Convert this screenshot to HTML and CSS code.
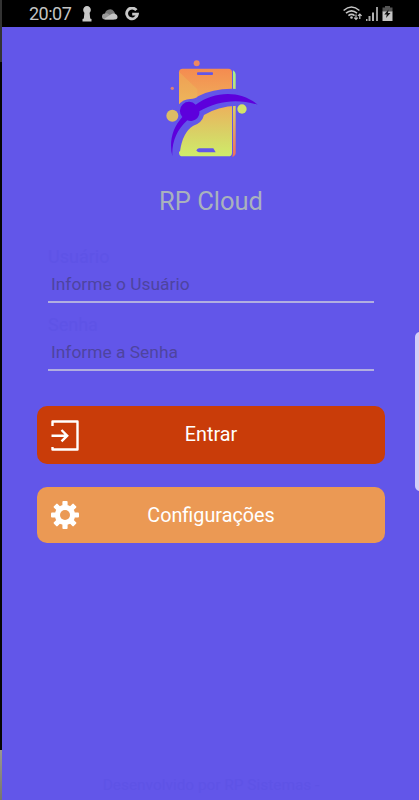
FILE: index.html
```
<!DOCTYPE html>
<html lang="pt-BR">
<head>
    <meta charset="UTF-8">
    <meta name="viewport" content="width=device-width, initial-scale=1.0">
    <title>RP Cloud</title>
    <link rel="stylesheet" href="styles.css">
</head>
<body>

    <div class="app-container">
        <div class="status-bar">
            <span class="clock">20:07</span>
            <svg class="icon-keyhole" width="10" height="16" viewBox="0 0 10 16">
                <path fill="#c8c8c8" d="M5 0A3.800 3.800 0 0 0 1.200 4c0 1.200.5 2 1.200 2.700L1.800 12.500.5 13v2.500h9V13l-1.300-.5-.6-5.800C8.300 6 8.800 5.200 8.800 4A3.800 3.800 0 0 0 5 0z"/>
            </svg>
            <svg class="icon-cloud" width="16" height="11" viewBox="0 0 16 11">
                <path fill="#777" d="M3 6a5 5 0 0 1 9-3.500L14 6l-6 2z"/>
                <path fill="#999" d="M3 10.500a3 3 0 0 1 0-6c2-.5 3 .2 5 1.500l4 4.500z"/>
                <path fill="#c4c4c4" d="M2 10l6-4c2-1.500 4-2 5.500-.8 2.500.3 3 5.300-.5 5.300H3.500z"/>
            </svg>
            <svg class="icon-google" width="14" height="14" viewBox="0 0 14 14">
                <path fill="none" stroke="#c8c8c8" stroke-width="2.800" d="M11.400 3.200A5.400 5.400 0 1 0 12.400 7.200H7.200"/>
            </svg>
            <div class="status-right">
                <svg width="20" height="15" viewBox="0 0 20 15">
                    <g fill="none" stroke="#c4c4c4" stroke-width="1.600">
                        <path d="M.6 4.500Q8.500-2.500 16.400 4.500"/>
                        <path d="M3 7.200Q8.500 2.400 14 7.200"/>
                        <path d="M5.400 9.700Q8.500 7.200 11.600 9.700"/>
                    </g>
                    <circle cx="8.500" cy="11.500" r="1.300" fill="#c4c4c4"/>
                    <path fill="none" stroke="#c4c4c4" stroke-width="1.200" d="M13 8.500v5m-1.800-1.800L13 13.500l1.800-1.800M16.800 13V8m-1.800 1.800L16.800 8l1.800 1.800"/>
                </svg>
                <svg width="13" height="14" viewBox="0 0 13 14">
                    <path fill="#aaa" d="M0 12h1.500v2H0zM2.500 9h2v5h-2z"/>
                    <path fill="#b4b4b4" d="M6 5.500h2V14H6z"/>
                    <path fill="#999" d="M10 0h2v14h-2z"/>
                </svg>
                <svg width="11" height="15" viewBox="0 0 11 15">
                    <path fill="#555" d="M3 0h5v1.500h2.500V6H.5V1.500H3z"/>
                    <path fill="#c4c4c4" d="M.5 5.500h10V15H.5z"/>
                    <path fill="#111" d="M6.500 3.500L2.300 8.500h2.500L4 12l4.500-5H6z"/>
                </svg>
            </div>
        </div>

        <div class="login">
            <svg class="logo" width="120" height="120" viewBox="0 0 360 360">
                <defs>
                    <linearGradient id="phone" x1="0" y1="0" x2="0" y2="1">
                        <stop offset="0" stop-color="#f58b50"/>
                        <stop offset=".4" stop-color="#eeaf5b"/>
                        <stop offset=".75" stop-color="#d8d366"/>
                        <stop offset="1" stop-color="#cfec69"/>
                    </linearGradient>
                    <linearGradient id="edge" x1="0" y1="0" x2="0" y2="1">
                        <stop offset="0" stop-color="#a5f389"/>
                        <stop offset=".4" stop-color="#d9d165"/>
                        <stop offset="1" stop-color="#ef6f5b"/>
                    </linearGradient>
                </defs>
                <path fill="url(#edge)" d="M249 61q8 4 8 12V309q0 8-10 12l2-10z"/>
                <rect x="87" y="56" width="159" height="263" rx="11" fill="url(#phone)"/>
                <path fill="#e9c75c" opacity=".3" d="M88 66L142 118V150H88z"/>
                <!-- gap around the swoosh -->
                <path fill="#6256e9" d="M84 166Q100 147 121 147Q136 147 144 139Q194 113 262 117V167Q202 169 162 195Q156 219 130 227Q98 246 90 304L60 318V205z"/>
                <path fill="#5d00dc" d="M67 319C57 277 66 235 97 201A26 26 0 0 1 137 164C193 124 269 119 323 164C263 145 202 152 148 184A26 26 0 0 1 112 211C80 240 65 276 67 319z"/>
                <rect x="141" y="67" width="48" height="8" rx="3" fill="#6256e9"/>
                <path fill="#6256e9" d="M147 295h43l7 12h-50q-7-1-7-6t7-6z"/>
                <circle cx="140" cy="40" r="9" fill="#ee8860"/>
                <circle cx="67" cy="115" r="5" fill="#dc8075"/>
                <circle cx="67" cy="197" r="18" fill="#dcbd64"/>
                <circle cx="276" cy="177" r="14" fill="#d3e36a"/>
            </svg>

            <h1 class="title">RP Cloud</h1>

            <form class="fields">
                <label class="label" for="usuario">Usuário</label>
                <input class="field" id="usuario" type="text" placeholder="Informe o Usuário">
                <label class="label" for="senha">Senha</label>
                <input class="field" id="senha" type="password" placeholder="Informe a Senha">
            </form>

            <button class="button button-enter" type="button">
                <svg width="28" height="31" viewBox="0 0 28 31">
                    <path fill="none" stroke="#fff" stroke-width="2.400" stroke-linejoin="round" d="M1.500 6V1.500h25v28h-25V27"/>
                    <path fill="none" stroke="#fff" stroke-width="2.400" d="M.5 15.700h15.500M10.500 10l5.700 5.700-5.700 5.700"/>
                </svg>
                <span>Entrar</span>
            </button>
            <button class="button button-config" type="button">
                <svg width="28" height="28" viewBox="0 0 28 28">
                    <g fill="#fff">
                        <rect x="11.400" y="0" width="5.200" height="28" rx="1"/>
                        <rect x="11.400" y="0" width="5.200" height="28" rx="1" transform="rotate(45 14 14)"/>
                        <rect x="11.400" y="0" width="5.200" height="28" rx="1" transform="rotate(90 14 14)"/>
                        <rect x="11.400" y="0" width="5.200" height="28" rx="1" transform="rotate(135 14 14)"/>
                        <circle cx="14" cy="14" r="10.200"/>
                    </g>
                    <circle cx="14" cy="14" r="5" fill="#eb9954"/>
                </svg>
                <span>Configurações</span>
            </button>

            <p class="footer">Desenvolvido por RP Sistemas -</p>
        </div>

        <div class="edge-handle"></div>
    </div>

</body>
</html>
```
FILE: styles.css
```
body {
    font-family: Roboto, sans-serif;
    margin: 0;
    background: linear-gradient(#333 0, #333 62px, #050505 62px, #050505 750px, #99978f 750px, #77756e 100%);
}
.app-container {
    display: flex;
    flex-direction: column;
    height: 800px;
    margin-left: 2px;
    background: #6256e9;
    position: relative;
    overflow: hidden;
}
.status-bar {
    display: flex;
    align-items: center;
    height: 27px;
    padding: 0 26px 0 27px;
    background: #000;
    box-sizing: border-box;
    color: #c4c4c4;
}
.clock {
    width: 53px;
    font-size: 18px;
    letter-spacing: -0.5px;
    line-height: 27px;
    white-space: nowrap;
}
.icon-cloud {
    margin-left: 10px;
    margin-top: 1px;
}
.icon-google {
    margin-left: 7px;
}
.status-right {
    display: flex;
    align-items: center;
    gap: 3px;
    margin-left: auto;
}
.login {
    display: flex;
    flex-direction: column;
    flex: 1;
    padding: 23px 34px 0 35px;
}
.logo {
    margin-left: 113px;
}
.title {
    margin: 16px 0 0;
    color: #a9b2bd;
    font-size: 25.5px;
    font-weight: 400;
    line-height: 30px;
    text-align: center;
}
.fields {
    display: flex;
    flex-direction: column;
    margin: 31px 11px 0;
}
.label {
    height: 20px;
    color: #5e53e6;
    font-size: 18px;
    line-height: 20px;
}
.field {
    height: 36px;
    margin: 0 0 12px;
    padding: 0 3px;
    box-sizing: border-box;
    background: none;
    border: none;
    border-bottom: 2px solid #b1aee0;
    border-radius: 0;
    font-family: inherit;
    font-size: 17.4px;
    outline: none;
}
.field::placeholder {
    color: #4e449f;
    opacity: 1;
}
.button {
    display: flex;
    align-items: center;
    padding: 0 14px;
    border: none;
    border-radius: 10px;
    color: #fff;
    font-family: inherit;
    font-size: 19.8px;
}
.button span {
    flex: 1;
    margin-right: 28px;
    text-align: center;
}
.button-enter {
    height: 58px;
    margin-top: 23px;
    background: #c93c09;
}
.button-enter span {
    padding-bottom: 2px;
}
.button-config {
    height: 56px;
    margin-top: 23px;
    background: #eb9954;
}
.footer {
    margin: auto 0 5px;
    color: #5e53e6;
    font-size: 15.4px;
    line-height: 20px;
    text-align: center;
}
/* side panel handle over the screen edge */
.edge-handle {
    position: absolute;
    top: 332px;
    right: -6px;
    width: 10px;
    height: 159px;
    background: #d3cef6;
    border-radius: 5px;
}
```
